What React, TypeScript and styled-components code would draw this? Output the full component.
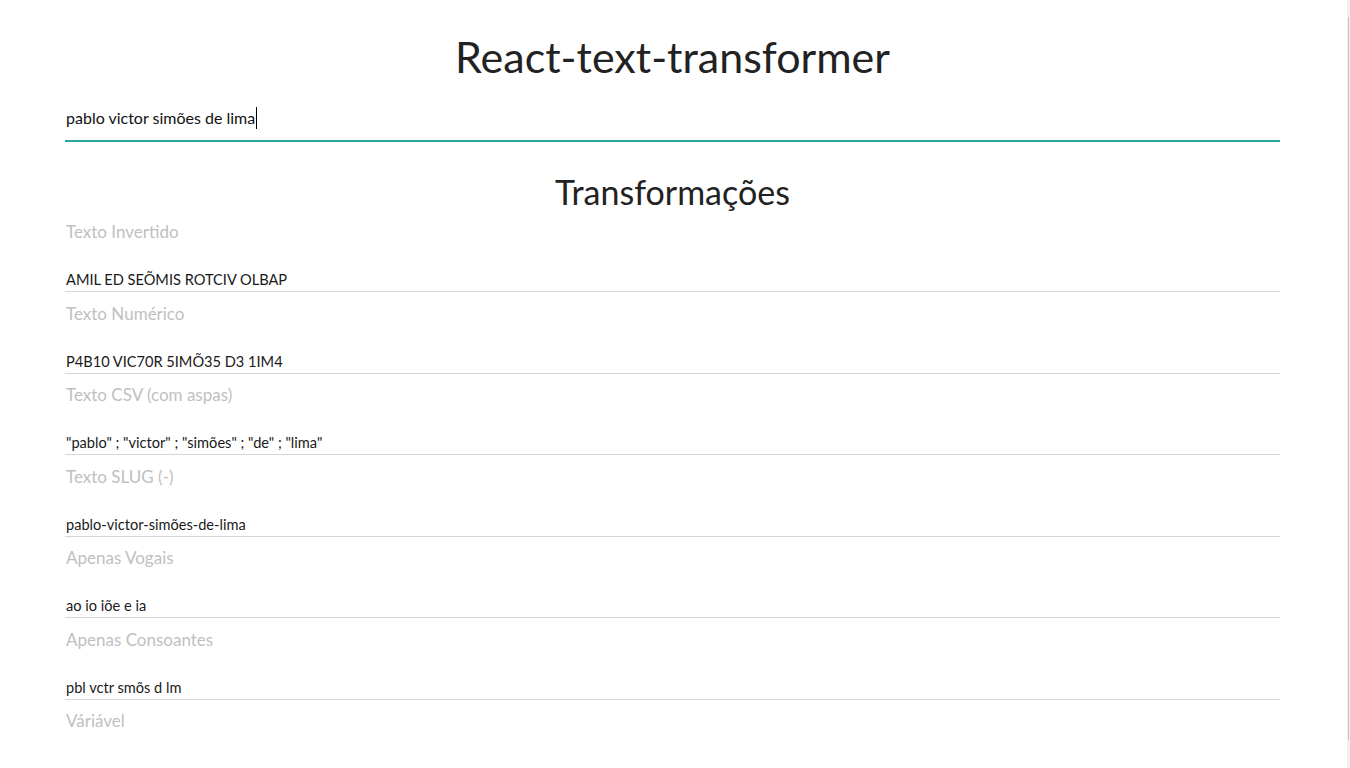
import React from "react";
import styled, { createGlobalStyle } from "styled-components";

const GlobalStyle = createGlobalStyle`
  html, body {
    margin: 0;
    padding: 0;
    background: #ffffff;
    overflow: hidden;
  }
  body {
    font-family: "Lato", "Open Sans", "Noto Sans", sans-serif;
    color: rgba(0, 0, 0, 0.87);
  }
`;

const Page = styled.div`
  width: 1215px;
  padding: 32px 70px 0 65px;
  box-sizing: content-box;
`;

const Title = styled.h1`
  margin: 0;
  font-size: 43px;
  line-height: 50px;
  font-weight: 400;
  text-align: center;
  color: #222;
`;

const InputBox = styled.div`
  margin-top: 14px;
  height: 44px;
  line-height: 44px;
  font-size: 16px;
  padding-left: 1px;
  border-bottom: 2px solid #26a69a;
  color: #111;
  display: flex;
  align-items: center;
`;

const Caret = styled.span`
  display: inline-block;
  width: 1px;
  height: 22px;
  background: #000;
  margin-left: 1px;
`;

const Subtitle = styled.h2`
  margin: 30px 0 9px;
  font-size: 34px;
  line-height: 40px;
  font-weight: 400;
  text-align: center;
  color: #222;
`;

const List = styled.div`
  display: flex;
  flex-direction: column;
  gap: 10.5px;
`;

const Field = styled.div`
  display: flex;
  flex-direction: column;
`;

const Label = styled.div`
  font-size: 17px;
  line-height: 22px;
  color: #bfbfbf;
  padding-left: 1px;
`;

const Value = styled.div`
  height: 49px;
  box-sizing: border-box;
  padding: 27px 0 0 1px;
  font-size: 14.6px;
  line-height: 20px;
  color: #1a1a1a;
  border-bottom: 1px solid #d6d6d6;
  white-space: pre;
`;

const ScrollTrack = styled.div`
  position: fixed;
  top: 0;
  right: 0;
  width: 3px;
  height: 100vh;
  background: #f0f0f0;
`;

const ScrollThumb = styled.div`
  margin: 17px 0 0 1px;
  width: 1px;
  height: 723px;
  background: #c4c4c4;
`;

const fields: { label: string; value: string }[] = [
  { label: "Texto Invertido", value: "AMIL ED SEÕMIS ROTCIV OLBAP" },
  { label: "Texto Numérico", value: "P4B10 VIC70R 5IMÕ35 D3 1IM4" },
  {
    label: "Texto CSV (com aspas)",
    value: '"pablo" ; "victor" ; "simões" ; "de" ; "lima"',
  },
  { label: "Texto SLUG (-)", value: "pablo-victor-simões-de-lima" },
  { label: "Apenas Vogais", value: "ao io iõe e ia" },
  { label: "Apenas Consoantes", value: "pbl vctr smõs d lm" },
  { label: "Váriável", value: "" },
];

export default function App() {
  return (
    <>
      <GlobalStyle />
      <Page>
        <Title>React-text-transformer</Title>
        <InputBox>
          pablo victor simões de lima
          <Caret />
        </InputBox>
        <Subtitle>Transformações</Subtitle>
        <List>
          {fields.map((f) => (
            <Field key={f.label}>
              <Label>{f.label}</Label>
              <Value>{f.value}</Value>
            </Field>
          ))}
        </List>
      </Page>
      <ScrollTrack>
        <ScrollThumb />
      </ScrollTrack>
    </>
  );
}
